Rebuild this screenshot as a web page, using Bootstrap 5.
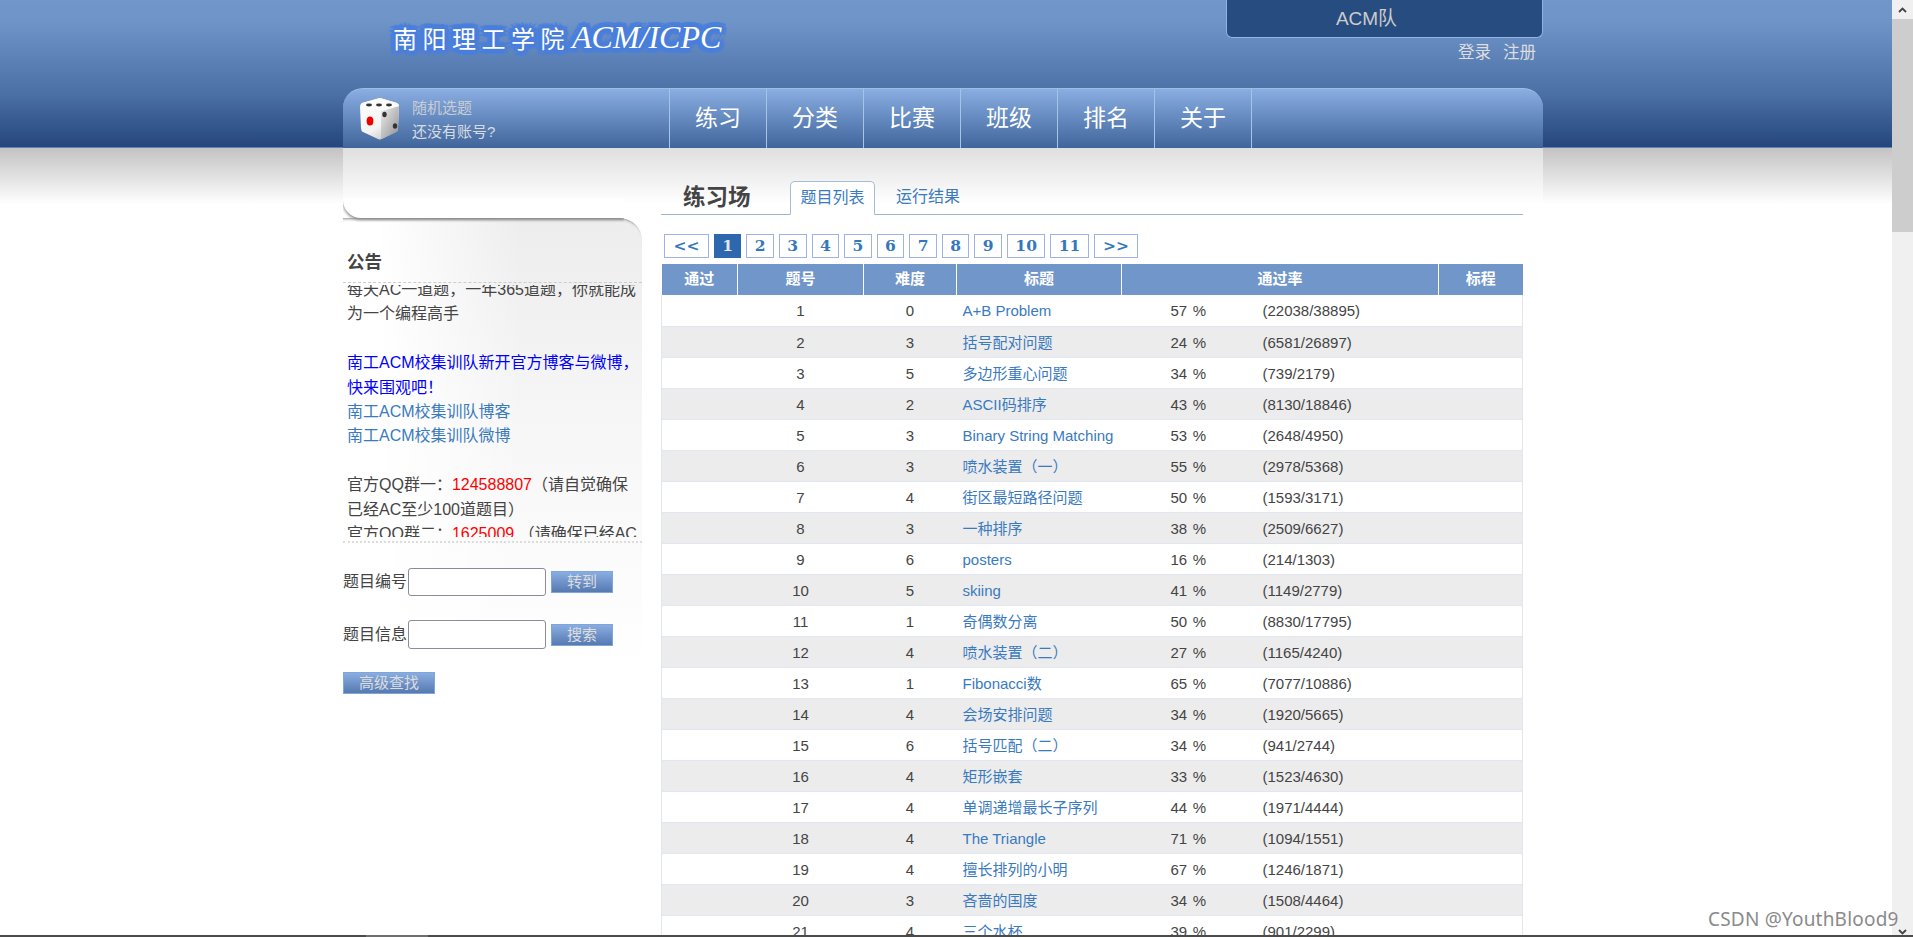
<!DOCTYPE html>
<html lang="zh">
<head>
<meta charset="utf-8">
<title>南阳理工学院 ACM/ICPC</title>
<link href="https://cdn.jsdelivr.net/npm/bootstrap@5.3.0/dist/css/bootstrap.min.css" rel="stylesheet">
<style>
html,body{height:937px;overflow:hidden}
body{font-family:"Liberation Sans","Noto Sans CJK SC",sans-serif;font-size:16px;color:#444;background:#fff}
a{text-decoration:none;color:#3a7abf}
.shell{height:935px;overflow:hidden}
.viewport{width:1892px;overflow:hidden}
.sbar{width:21px;background:#f0f0f0}
.sbar-up{height:19px;line-height:17px}
.sbar-thumb{height:213px;background:#cdcdcd}
.sbar-down{height:16px;margin-top:auto}
.hbar{height:2px;background:#4b4b4b}
.hbar-thumb{width:62px;margin-left:366px;background:#6e6e6e}
.topband{height:148px;background:linear-gradient(#7196ca 0,#6f94c8 15%,#4a6fa5 65%,#24467c 100%);border-bottom:1px solid #5f84b4}
.center{width:1200px;margin-left:343px}
.head-row{height:88px}
.logo-text{margin:19px 0 0 50px;height:38px;color:#fff;font-family:"Noto Sans CJK SC",sans-serif;font-weight:400;font-size:24px;line-height:36px;letter-spacing:5.5px;white-space:nowrap;text-shadow:5px 0 1px #4a7fdc,-5px 0 1px #4a7fdc,0 5px 1px #4a7fdc,0 -5px 1px #4a7fdc,4px 4px 1px #4a7fdc,-4px 4px 1px #4a7fdc,4px -4px 1px #4a7fdc,-4px -4px 1px #4a7fdc,3px 0 0 #4a7fdc,-3px 0 0 #4a7fdc,0 3px 0 #4a7fdc,0 -3px 0 #4a7fdc,2px 2px 0 #4a7fdc,-2px 2px 0 #4a7fdc,2px -2px 0 #4a7fdc,-2px -2px 0 #4a7fdc,1px 0 0 #4a7fdc,-1px 0 0 #4a7fdc,0 0 2px #4a7fdc}
.logo-latin{font-family:"Liberation Serif",serif;font-style:italic;font-size:32px;letter-spacing:0;margin-left:2px}
.team-wrap{width:317px}
.team{height:38px;background:#274c80;border:1px solid #8fb4e4;border-top:0;border-radius:0 0 6px 6px;color:#ccc;font-size:19px;line-height:37px;text-align:center;padding-right:36px}
.auth{font-size:16.5px;line-height:22px;margin-top:3px;padding-right:7px;gap:12px}
.auth a{color:#ddd}
.menu{height:60px;background:linear-gradient(#8aaee2,#3f659b);border-top:1px solid #9ac0e4;border-radius:20px 20px 0 0}
.dice-box{width:326px;padding-left:17px;gap:12px}
.dice-txt{font-size:15px;line-height:24px;padding-top:2px}
.dice-txt a{color:#c9cdd4;display:block}
.dice-txt a+a{color:#d8dce2}
.menu-item{width:97px;border-left:1px solid #a6c4e4;color:#fff;font-size:23px;text-align:center;line-height:58px}
.menu-end{border-left:1px solid #a6c4e4}
.under{background:linear-gradient(#c4c2c2 0,#fff 100%);height:56px;margin-bottom:-56px}
.under-in{width:1200px;height:56px;margin-left:343px;background:linear-gradient(#e0dfdf,#fff)}
.content-row{position:relative}
.side{width:299px;padding-top:50px}
.side-cap{width:281px;height:20px;background:#fff;border-radius:0 0 0 18px;box-shadow:0 2px 3px #8f8f8f;clip-path:inset(0 0 -6px 0);position:relative;z-index:1}
.panel{height:444px;border-radius:0 22px 0 0;background:linear-gradient(to right,#fff 0,#fff 12%,rgba(255,255,255,0) 60%),linear-gradient(#ededed 0,#f7f7f7 50%,#fdfdfd 90%,#fff 100%);box-shadow:inset 0 4px 3px -3px #8a8a8a}
.panel-title{font-size:17.5px;font-weight:700;height:65px;padding:31px 0 0 4px;line-height:26px;color:#444;border-bottom:1px dashed #ccc}
.notice-clip{height:252px;overflow:hidden;margin-top:2px;padding-left:4px}
.notice{margin-top:-7px;line-height:24.4px}
.notice .gap{height:24.4px}
.blue{color:#00f}
.red{color:#f00}
.dot-line{border-top:2px dotted #ddd;margin-top:4px}
.form-wrap{margin-top:25px}
.fr{height:28px}
.fr+.fr{margin-top:24px;height:29px}
.fld{width:138px;height:100%;margin-left:1px;border:1px solid #8b8b9b;border-radius:3px;background:#fff;padding:0 4px}
.pbtn{background:linear-gradient(#8aade1,#557ab1);border:1px solid #7fa6da;color:#ddd;font-size:15px;line-height:20px;padding:0;height:22px;border-radius:0}
.pbtn-s{width:62px;margin-left:5px}
.pbtn-l{width:92px;display:block;margin-top:10px}
.main{width:862px;margin-left:19px;padding-top:33px}
.tabs{height:34px;border-bottom:1px solid #9db6cf;padding-left:22px}
.tabs-h{font-size:22.5px;font-weight:700;color:#444;width:107px;line-height:32px;padding-top:1px}
.tab-on{width:85px;height:34px;border:1px solid #a5bcd4;border-bottom-color:#fff;border-radius:5px 5px 0 0;background:#fff;text-align:center;line-height:32px;color:#3a7abf}
.tab-off{line-height:31px;margin-left:21px;color:#3a7abf}
.pager{gap:5px;margin:19px 0 6px 3px;height:24px}
.pg{height:24px;border:1px solid #9fb1e8;padding:0 7.4px;font-family:"DejaVu Serif",serif;font-weight:700;font-size:15.5px;line-height:21px;color:#3477bd;background:#fff}
.pg-wide{padding:0 8.4px}
.pg-on{background:#2d67ae;border-color:#2d67ae;color:#dfe8f4}
.ptable{width:862px;border-collapse:collapse;table-layout:fixed;font-size:15px}
.ptable th{height:31px;background:#7196ca;color:#fff;font-weight:700;font-size:15px;text-align:center;border-left:1px solid #fff;padding:0}
.ptable th:first-child{border-left:0}
.ptable td{height:31px;padding:1px 0 0;border-bottom:1px solid #e1e6f1;line-height:29px}
.ptable td:first-child{border-left:1px solid #e1e6f1}
.ptable td:last-child{border-right:1px solid #e1e6f1}
.ptable tbody tr:nth-child(even) td{background:#ececed}
.c{text-align:center}
td.tt{padding-left:6px}
td.pct{padding-left:49px}
.pct-v{width:92px;word-spacing:1.5px}
.wm{position:absolute;left:1708px;top:907px;font-family:"Noto Sans",sans-serif;font-size:19px;line-height:24px;color:#8a8a8a;text-shadow:0 0 2px #fff;letter-spacing:.2px}
</style>
</head>
<body>
<div class="shell d-flex">
  <div class="viewport">
    <div class="topband">
      <div class="center">
        <div class="head-row d-flex justify-content-between">
          <div class="logo-text">南阳理工学院<span class="logo-latin">ACM/ICPC</span></div>
          <div class="team-wrap">
            <div class="team">ACM队</div>
            <div class="auth d-flex justify-content-end"><a href="#">登录</a><a href="#">注册</a></div>
          </div>
        </div>
        <div class="menu d-flex">
          <div class="dice-box d-flex align-items-center">
            <svg width="40" height="42" viewBox="0 0 40 42" aria-hidden="true">
              <defs>
                <linearGradient id="dl" x1="0" y1="0" x2="0.6" y2="1"><stop offset="0" stop-color="#fff"/><stop offset="0.7" stop-color="#f4f4f4"/><stop offset="1" stop-color="#cfcfcf"/></linearGradient>
                <linearGradient id="dr" x1="0" y1="0" x2="1" y2="1"><stop offset="0" stop-color="#eee"/><stop offset="1" stop-color="#8f8f8f"/></linearGradient>
              </defs>
              <path d="M20 0 37 5 Q39 6 39 9 L38 30 Q38 33 36 34 L21 41 Q20 42 18 41 L3 34 Q1 33 1 30 L0 9 Q0 6 2 5Z" fill="url(#dl)"/>
              <path d="M21 13 39 8 38 30Q38 33 36 34L22 41 21 41Z" fill="url(#dr)"/>
              <path d="M20 0 37 5Q39 6 39 8L21 13 1 8Q1 6 2 5Z" fill="#fbfbfb"/>
              <ellipse cx="9" cy="7" rx="3" ry="1.4" fill="#333"/><ellipse cx="19" cy="7" rx="3" ry="1.4" fill="#333"/><ellipse cx="29" cy="7" rx="3" ry="1.4" fill="#333"/>
              <ellipse cx="10" cy="23" rx="3.4" ry="4.6" fill="#e00"/>
              <ellipse cx="24.5" cy="16.5" rx="2.2" ry="2.8" fill="#333"/><ellipse cx="35" cy="28" rx="2.2" ry="2.8" fill="#333"/>
            </svg>
            <div class="dice-txt"><a href="#">随机选题</a><a href="#">还没有账号?</a></div>
          </div>
          <div class="menu-item">练习</div><div class="menu-item">分类</div><div class="menu-item">比赛</div><div class="menu-item">班级</div><div class="menu-item">排名</div><div class="menu-item">关于</div>
          <div class="menu-end"></div>
        </div>
      </div>
    </div>
    <div class="under"><div class="under-in"></div></div>
    <div class="center content-row d-flex">
      <div class="side">
        <div class="side-cap"></div>
        <div class="panel">
          <div class="panel-title">公告</div>
          <div class="notice-clip"><div class="notice">
            每天AC一道题，一年365道题，你就能成为一个编程高手
            <div class="gap"></div>
            <div class="blue">南工ACM校集训队新开官方博客与微博，快来围观吧！</div>
            <a href="#" class="d-block">南工ACM校集训队博客</a>
            <a href="#" class="d-block">南工ACM校集训队微博</a>
            <div class="gap"></div>
            官方QQ群一：<span class="red">124588807</span>（请自觉确保已经AC至少100道题目）<br>
            官方QQ群二：<span class="red">1625009</span> （请确保已经AC至少50道题目）
          </div></div>
          <div class="dot-line"></div>
          <div class="form-wrap">
            <div class="fr d-flex align-items-center">题目编号<input class="fld" type="text"><button class="pbtn pbtn-s" type="button">转到</button></div>
            <div class="fr d-flex align-items-center">题目信息<input class="fld" type="text"><button class="pbtn pbtn-s" type="button">搜索</button></div>
          </div>
        </div>
        <button class="pbtn pbtn-l" type="button">高级查找</button>
      </div>
      <div class="main">
        <div class="tabs d-flex">
          <div class="tabs-h">练习场</div>
          <div class="tab-on">题目列表</div>
          <div class="tab-off">运行结果</div>
        </div>
        <div class="pager d-flex">
          <span class="pg pg-wide">&lt;&lt;</span><span class="pg pg-on">1</span><span class="pg">2</span><span class="pg">3</span><span class="pg">4</span><span class="pg">5</span><span class="pg">6</span><span class="pg">7</span><span class="pg">8</span><span class="pg">9</span><span class="pg">10</span><span class="pg">11</span><span class="pg pg-wide">&gt;&gt;</span>
        </div>
        <table class="ptable">
          <colgroup><col style="width:76px"><col style="width:126px"><col style="width:93px"><col style="width:165px"><col style="width:317px"><col></colgroup>
          <thead><tr><th>通过</th><th>题号</th><th>难度</th><th>标题</th><th>通过率</th><th>标程</th></tr></thead>
          <tbody id="rows">
          </tbody>
        </table>
      </div>
    </div>
  </div>
  <div class="sbar d-flex flex-column align-items-center">
    <div class="sbar-up w-100 text-center"><svg width="9" height="6" viewBox="0 0 9 6" aria-hidden="true"><path d="M1 5 4.5 1.5 8 5" fill="none" stroke="#444" stroke-width="1.8"/></svg></div>
    <div class="sbar-thumb w-100"></div>
    <div class="sbar-down"><svg width="9" height="6" viewBox="0 0 9 6" aria-hidden="true"><path d="M1 1 4.5 4.5 8 1" fill="none" stroke="#444" stroke-width="1.8"/></svg></div>
  </div>
</div>
<div class="hbar d-flex"><div class="hbar-thumb"></div></div>
<div class="wm">CSDN @YouthBlood9</div>
<script>
var d=[["1","0","A+B Problem","57","22038/38895"],["2","3","括号配对问题","24","6581/26897"],["3","5","多边形重心问题","34","739/2179"],["4","2","ASCII码排序","43","8130/18846"],["5","3","Binary String Matching","53","2648/4950"],["6","3","喷水装置（一）","55","2978/5368"],["7","4","街区最短路径问题","50","1593/3171"],["8","3","一种排序","38","2509/6627"],["9","6","posters","16","214/1303"],["10","5","skiing","41","1149/2779"],["11","1","奇偶数分离","50","8830/17795"],["12","4","喷水装置（二）","27","1165/4240"],["13","1","Fibonacci数","65","7077/10886"],["14","4","会场安排问题","34","1920/5665"],["15","6","括号匹配（二）","34","941/2744"],["16","4","矩形嵌套","33","1523/4630"],["17","4","单调递增最长子序列","44","1971/4444"],["18","4","The Triangle","71","1094/1551"],["19","4","擅长排列的小明","67","1246/1871"],["20","3","吝啬的国度","34","1508/4464"],["21","4","三个水杯","39","901/2299"]];
document.getElementById("rows").innerHTML=d.map(function(r){return '<tr><td></td><td class="c">'+r[0]+'</td><td class="c">'+r[1]+'</td><td class="tt"><a href="#">'+r[2]+'</a></td><td class="pct"><div class="d-flex"><span class="pct-v">'+r[3]+' %</span><span>('+r[4]+')</span></div></td><td></td></tr>';}).join("");
</script>
</body>
</html>
